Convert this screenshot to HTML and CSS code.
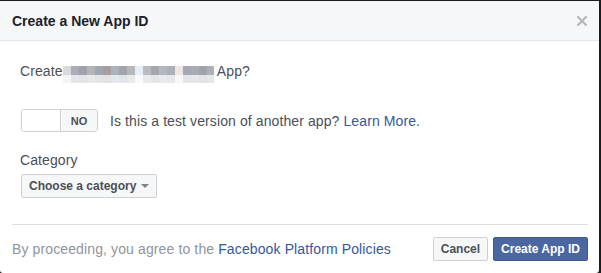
FILE: index.html
```html
<!DOCTYPE html>
<html lang="en">
<head>
  <meta charset="UTF-8">
  <title>Create a New App ID</title>
  <link rel="stylesheet" href="styles.css">
</head>
<body>
  <div class="dialog">
    <div class="dialog-head">
      <div class="dialog-title">Create a New App ID</div>
      <button class="dialog-close" aria-label="Close">
        <svg width="10" height="10" viewBox="0 0 10 10">
          <path d="M1 1 L9 9 M9 1 L1 9" stroke="#b4b7bd" stroke-width="2.2" stroke-linecap="square"/>
        </svg>
      </button>
    </div>

    <div class="dialog-body">
      <div class="create-line">Create<span class="blurred"><span class="blur-row main"><i></i><i></i><i></i><i></i><i></i><i></i><i></i><i></i><i></i><i></i><i></i><i></i><i></i><i></i><i></i><i></i><i></i><i></i><i></i></span><span class="blur-row low"><i></i><i></i><i></i><i></i><i></i><i></i><i></i><i></i><i></i><i></i><i></i><i></i><i></i><i></i><i></i><i></i><i></i><i></i><i></i></span></span> App?</div>

      <div class="test-row">
        <div class="toggle">
          <span class="toggle-off"></span>
          <span class="toggle-label">NO</span>
        </div>
        <span class="test-text">Is this a test version of another app? <a href="#">Learn More.</a></span>
      </div>

      <div class="field-label">Category</div>
      <button class="select-btn">Choose a category <span class="caret"></span></button>
    </div>

    <div class="dialog-foot">
      <div class="foot-note">By proceeding, you agree to the <a href="#">Facebook Platform Policies</a></div>
      <div class="foot-actions">
        <button class="btn">Cancel</button>
        <button class="btn btn-primary">Create App ID</button>
      </div>
    </div>
  </div>
</body>
</html>
```

FILE: styles.css
```css
html, body {
  margin: 0; padding: 0;
  background: #1b1c1e;
  font-family: "Liberation Sans", Arial, Helvetica, sans-serif;
  overflow: hidden;
}
.dialog {
  width: 599px; height: 272px; margin-top: 1px;
  background: #fff; border-radius: 0 0 3px 3px;
  overflow: hidden; color: #4b4f56;
}
.dialog-head {
  height: 39px; border-bottom: 1px solid #e5e5e5;
  background: #f6f7f9;
  display: flex; align-items: center; justify-content: space-between;
  padding: 0 12px;
}
.dialog-title { font-size: 14px; line-height: 16px; font-weight: bold; color: #1d2129; }
.dialog-close {
  background: none; border: 0; padding: 0;
  width: 10px; height: 10px; display: flex; cursor: pointer;
}
.dialog-close svg { display: block; }

.dialog-body { padding: 22px 20px 0 20px; height: 161px; letter-spacing: 0.1px; }
.create-line { font-size: 14px; line-height: 16px; height: 16px; white-space: nowrap; }
.blurred {
  display: inline-block; overflow: hidden;
  width: 151px; height: 17px; vertical-align: -7px;
  filter: blur(0.4px);
}
.blur-row { display: flex; }
.blur-row i { display: block; width: 8px; flex: none; }
.blur-row.main { height: 9px; }
.blur-row.low { height: 8px; opacity: .3; }
.blur-row i:nth-child(1) { background: #d8dade; }
.blur-row i:nth-child(2) { background: #a9adb6; }
.blur-row i:nth-child(3) { background: #9da2ab; }
.blur-row i:nth-child(4) { background: #b2b4b8; }
.blur-row i:nth-child(5) { background: #9ea7b2; }
.blur-row i:nth-child(6) { background: #a89c9e; }
.blur-row i:nth-child(7) { background: #aab3bf; }
.blur-row i:nth-child(8) { background: #a3a5aa; }
.blur-row i:nth-child(9) { background: #b6b8bb; }
.blur-row i:nth-child(10) { background: #e6eef7; }
.blur-row i:nth-child(11) { background: #b9bbbe; }
.blur-row i:nth-child(12) { background: #a2a6ad; }
.blur-row i:nth-child(13) { background: #b4b8bf; }
.blur-row i:nth-child(14) { background: #aab0b9; }
.blur-row i:nth-child(15) { background: #efe6e4; }
.blur-row i:nth-child(16) { background: #a3a8b2; }
.blur-row i:nth-child(17) { background: #a8acb4; }
.blur-row i:nth-child(18) { background: #9fa3ab; }
.blur-row i:nth-child(19) { background: #acb0b7; width: 7px; }

.test-row { display: flex; align-items: center; margin-top: 30px; height: 23px; }
.toggle {
  display: flex; width: 75px; height: 21px;
  border: 1px solid #ced0d4; border-radius: 3px; overflow: hidden;
  margin-left: 1px;
}
.toggle-off { width: 38px; background: #fff; }
.toggle-label {
  flex: 1; background: #f6f7f9; border-left: 1px solid #ced0d4;
  font-size: 11px; font-weight: bold; color: #4b4f56; letter-spacing: 0;
  display: flex; align-items: center; justify-content: center;
}
.test-text { margin-left: 12px; font-size: 14px; line-height: 16px; }
a { color: #365899; text-decoration: none; }

.field-label { margin-top: 20px; font-size: 14px; line-height: 16px; }
.select-btn {
  margin-top: 6px; margin-left: 1px;
  height: 24px; width: 136px; white-space: nowrap;
  display: flex; align-items: center; gap: 5px;
  padding: 0 7px; border: 1px solid #ced0d4; border-radius: 2px;
  background: #f6f7f9; color: #4b4f56;
  font-family: inherit; font-size: 12px; font-weight: bold; cursor: pointer;
}
.caret {
  width: 0; height: 0;
  border-left: 4px solid transparent; border-right: 4px solid transparent;
  border-top: 4px solid #7f8389;
}

.dialog-foot {
  margin: 0 11px 0 12px; border-top: 1px solid #dddfe2;
  padding-top: 12px;
  display: flex; align-items: center; justify-content: space-between;
}
.foot-note { font-size: 14px; line-height: 16px; color: #90949c; letter-spacing: 0.12px; }
.foot-actions { display: flex; gap: 5px; }
.btn {
  height: 24px; padding: 0 7px;
  border: 1px solid #ced0d4; border-radius: 2px;
  background: #f6f7f9; color: #4b4f56;
  font-family: inherit; font-size: 12px; font-weight: bold; cursor: pointer;
}
.btn-primary { background: #4b67a1; border-color: #425b8f; color: #fff; }
```
